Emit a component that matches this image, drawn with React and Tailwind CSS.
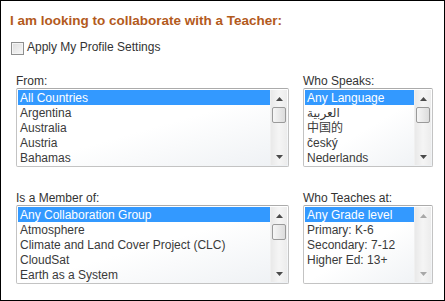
import React from 'react';

const font = { fontFamily: '"Liberation Sans", Arial, "Noto Sans CJK SC", "DejaVu Sans", sans-serif' };

const ScrollArrow = ({ up, disabled }) => (
  <div className="h-[17px] flex items-center justify-center">
    <svg width="7" height="4" viewBox="0 0 7 4">
      <path d={up ? 'M3.5 0 L7 4 L0 4 Z' : 'M0 0 L7 0 L3.5 4 Z'} fill={disabled ? '#a8a8a8' : '#4a4a4a'} />
    </svg>
  </div>
);

const Scrollbar = ({ disabled }) => (
  <div className="w-[17px] flex flex-col bg-gradient-to-r from-[#e9e9e9] via-[#f5f5f5] to-[#ececec] border-l border-[#f0f0f0]">
    <ScrollArrow up disabled={disabled} />
    <div className="flex-1 relative">
      {!disabled && (
        <div className="absolute left-[1px] right-[1px] top-0 h-[16px] rounded-[2px] border border-[#9a9a9a] bg-gradient-to-r from-[#f6f6f6] to-[#dcdcdc]" />
      )}
    </div>
    <ScrollArrow disabled={disabled} />
  </div>
);

const ListBox = ({ items, disabled, className }) => (
  <div className={`h-[79px] flex border border-[#c3c3c3] border-t-[#ababab] rounded-[2px] p-[1px] bg-gradient-to-br from-white via-white to-[#eef1f4] ${className}`}>
    <div className="flex-1 flex flex-col overflow-hidden">
      {items.map((item, i) => (
        <div
          key={i}
          className={`h-[15px] leading-[16px] pl-[2px] text-[12px] whitespace-nowrap ${i === 0 ? 'bg-[#3399ff] text-white' : 'text-[#3a3a3a]'}`}
        >
          {item}
        </div>
      ))}
    </div>
    <Scrollbar disabled={disabled} />
  </div>
);

const Field = ({ label, items, disabled, width }) => (
  <div className="flex flex-col">
    <div className="h-[15px] leading-[16px] text-[12px] text-[#333]">{label}</div>
    <ListBox items={items} disabled={disabled} className={width} />
  </div>
);

export default function App() {
  return (
    <div style={font} className="w-[445px] h-[301px] border border-black bg-white box-border pt-[11px]">
      <h1 className="ml-[9px] h-[17px] leading-[17px] text-[13.5px] font-bold text-[#b35a1c]">
        I am looking to collaborate with a Teacher:
      </h1>

      <label className="mt-[11px] ml-[10px] flex items-center h-[15px] text-[12px] text-[#333]">
        <span className="w-[13px] h-[13px] mt-[1px] border border-[#8e8f8f] bg-gradient-to-br from-[#dcdcdc] to-[#f8f8f8] shadow-[inset_0_0_0_1px_#f4f4f4]" />
        <span className="ml-[3px] leading-[17px]">Apply My Profile Settings</span>
      </label>

      <div className="mt-[18px] ml-[15px] flex flex-col gap-[23px]">
        <div className="flex gap-[14px]">
          <Field
            label="From:"
            width="w-[273px]"
            items={['All Countries', 'Argentina', 'Australia', 'Austria', 'Bahamas']}
          />
          <Field
            label="Who Speaks:"
            width="w-[130px]"
            items={['Any Language', 'العربية', '中国的', 'český', 'Nederlands']}
          />
        </div>
        <div className="flex gap-[14px]">
          <Field
            label="Is a Member of:"
            width="w-[273px]"
            items={['Any Collaboration Group', 'Atmosphere', 'Climate and Land Cover Project (CLC)', 'CloudSat', 'Earth as a System']}
          />
          <Field
            label="Who Teaches at:"
            width="w-[130px]"
            disabled
            items={['Any Grade level', 'Primary: K-6', 'Secondary: 7-12', 'Higher Ed: 13+']}
          />
        </div>
      </div>
    </div>
  );
}
